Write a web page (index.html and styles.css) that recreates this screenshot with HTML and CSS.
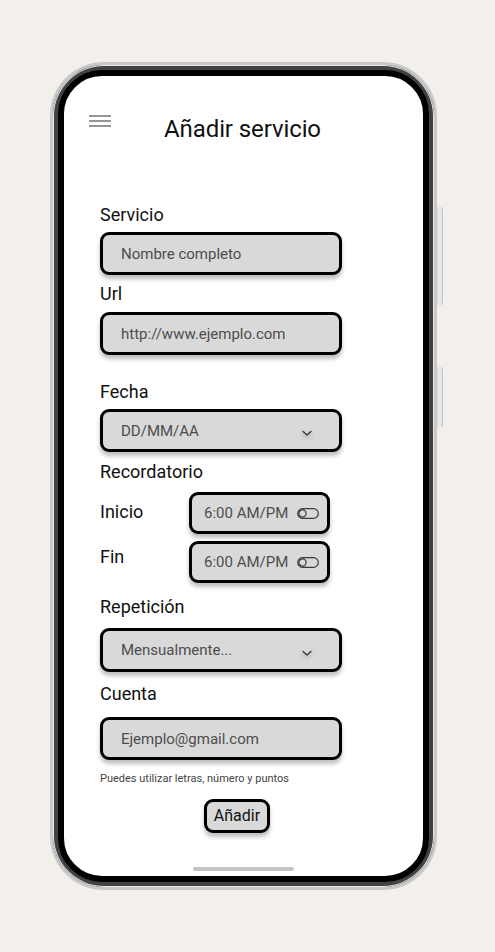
FILE: index.html
```html
<!DOCTYPE html>
<html lang="es">
<head>
<meta charset="utf-8">
<title>Añadir servicio</title>
<link rel="stylesheet" href="styles.css">
</head>
<body>
<div class="phone">
  <div class="side-btn side-btn--power"></div>
  <div class="side-btn side-btn--volume"></div>
  <div class="screen">
    <header class="header">
      <div class="menu">
        <svg width="22" height="12" viewBox="0 0 22 12" aria-hidden="true">
          <path d="M0 1H22M0 6H22M0 11H22" stroke="#767676" stroke-width="1.6" fill="none"/>
        </svg>
      </div>
      <h1 class="title">Añadir servicio</h1>
      <div></div>
    </header>

    <form class="form">
      <div class="label label--first">Servicio</div>
      <div class="field field--gap7">
        <span class="placeholder">Nombre completo</span>
      </div>

      <div class="label label--gap8">Url</div>
      <div class="field field--gap8">
        <span class="placeholder">http://www.ejemplo.com</span>
      </div>

      <div class="label label--gap26">Fecha</div>
      <div class="field field--gap7 field--select">
        <span class="placeholder">DD/MM/AA</span>
        <svg class="chevron" width="12" height="8" viewBox="0 0 12 8" aria-hidden="true">
          <path d="M2 2.5L6 6L10 2.5" stroke="#3a3a3a" stroke-width="1.4" fill="none" stroke-linecap="round" stroke-linejoin="round"/>
        </svg>
      </div>

      <div class="label label--gap9">Recordatorio</div>
      <div class="time-row time-row--first">
        <div class="row-label row-label--start">Inicio</div>
        <div class="time-box">
          <span class="placeholder">6:00 AM/PM</span>
          <svg class="toggle" width="22" height="11" viewBox="0 0 22 11" aria-hidden="true">
            <rect x="0.7" y="0.7" width="20.6" height="9.6" rx="4.8" fill="none" stroke="#3a3a3a" stroke-width="1.2"/>
            <circle cx="5.5" cy="5.5" r="3.6" fill="none" stroke="#3a3a3a" stroke-width="1.2"/>
          </svg>
        </div>
      </div>
      <div class="time-row time-row--second">
        <div class="row-label row-label--end">Fin</div>
        <div class="time-box">
          <span class="placeholder">6:00 AM/PM</span>
          <svg class="toggle" width="22" height="11" viewBox="0 0 22 11" aria-hidden="true">
            <rect x="0.7" y="0.7" width="20.6" height="9.6" rx="4.8" fill="none" stroke="#3a3a3a" stroke-width="1.2"/>
            <circle cx="5.5" cy="5.5" r="3.6" fill="none" stroke="#3a3a3a" stroke-width="1.2"/>
          </svg>
        </div>
      </div>

      <div class="label label--gap13">Repetición</div>
      <div class="field field--gap11 field--select field--tall">
        <span class="placeholder">Mensualmente...</span>
        <svg class="chevron chevron--low" width="12" height="8" viewBox="0 0 12 8" aria-hidden="true">
          <path d="M2 2.5L6 6L10 2.5" stroke="#3a3a3a" stroke-width="1.4" fill="none" stroke-linecap="round" stroke-linejoin="round"/>
        </svg>
      </div>

      <div class="label label--gap11">Cuenta</div>
      <div class="field field--gap13">
        <span class="placeholder">Ejemplo@gmail.com</span>
      </div>

      <p class="helper">Puedes utilizar letras, número y puntos</p>

      <button type="button" class="btn">Añadir</button>
    </form>

    <div class="home-indicator"></div>
  </div>
</div>
</body>
</html>
```

FILE: styles.css
```css
html, body {
  margin: 0;
  padding: 0;
}

body {
  background: #f3efeb;
  font-family: Roboto, "Noto Sans", "Liberation Sans", sans-serif;
  width: 495px;
  height: 952px;
  overflow: hidden;
}

.phone {
  position: relative;
  box-sizing: border-box;
  width: 387px;
  height: 828px;
  margin: 62px 0 0 50px;
  border-radius: 54px;
  background: #424242;
  border: 3px solid #c9c9c9;
  padding: 5px;
  box-shadow: inset 0 0 0 1px #e6e6e6;
}

.side-btn {
  position: absolute;
  right: -9px;
  width: 5px;
  border-radius: 0 3px 3px 0;
  background: linear-gradient(to right, #d6d6d6, #f0f0f0 60%, #d8d8d8);
  border-right: 1px solid #c4c4c4;
}

.side-btn--power {
  top: 142px;
  height: 98px;
}

.side-btn--volume {
  top: 302px;
  height: 60px;
}

.screen {
  box-sizing: border-box;
  height: 100%;
  border: 6px solid #000;
  border-radius: 44px;
  background: #fff;
  display: flex;
  flex-direction: column;
  overflow: hidden;
}

.header {
  display: grid;
  grid-template-columns: 1fr auto 1fr;
  padding-top: 39px;
}

.menu {
  padding-left: 25px;
  align-self: start;
  line-height: 0;
}

.title {
  margin: 0 0 0 -2px;
  font-size: 24px;
  line-height: 28px;
  font-weight: 400;
  color: #111;
  white-space: nowrap;
  letter-spacing: -0.1px;
}

.form {
  display: flex;
  flex-direction: column;
  align-items: flex-start;
  padding-left: 36px;
  margin: 0;
}

.label {
  font-size: 18px;
  line-height: 21px;
  color: #111;
}

.label--first { margin-top: 61px; }
.label--gap8 { margin-top: 8px; }
.label--gap9 { margin-top: 9px; }
.label--gap11 { margin-top: 11px; }
.label--gap13 { margin-top: 13px; }
.label--gap26 { margin-top: 26px; }

.field {
  box-sizing: border-box;
  width: 242px;
  height: 43px;
  border: 3px solid #000;
  border-radius: 9px;
  background: #d9d9d9;
  box-shadow: 0 4px 4px rgba(0, 0, 0, 0.25);
  display: flex;
  align-items: center;
  padding: 0 26px 0 18px;
}

.field--gap7 { margin-top: 7px; }
.field--gap8 { margin-top: 8px; }
.field--gap11 { margin-top: 11px; }
.field--gap13 { margin-top: 13px; }
.field--tall { height: 44px; }

.field--select {
  justify-content: space-between;
}

.placeholder {
  font-size: 15px;
  line-height: 18px;
  color: #4d4d4d;
  white-space: nowrap;
}

.chevron {
  margin-top: 4px;
  filter: drop-shadow(0 2px 2px rgba(0, 0, 0, 0.3));
}

.chevron--low {
  margin-top: 6px;
}

.time-row {
  display: flex;
  align-items: flex-start;
}

.time-row--first { margin-top: 10px; }
.time-row--second { margin-top: 7px; }

.row-label {
  width: 89px;
  font-size: 18px;
  line-height: 21px;
  color: #111;
}

.row-label--start { padding-top: 9px; }
.row-label--end { padding-top: 5px; }

.time-box {
  box-sizing: border-box;
  width: 141px;
  height: 42px;
  border: 3px solid #000;
  border-radius: 9px;
  background: #d9d9d9;
  box-shadow: 0 4px 4px rgba(0, 0, 0, 0.25);
  display: flex;
  align-items: center;
  justify-content: space-between;
  padding: 0 8px 0 12px;
}

.toggle {
  display: block;
}

.helper {
  margin: 12px 0 0;
  font-size: 11px;
  line-height: 13px;
  color: #444;
  white-space: nowrap;
}

.btn {
  margin-top: 14px;
  margin-left: 104px;
  box-sizing: border-box;
  width: 66px;
  height: 34px;
  border: 3px solid #000;
  border-radius: 9px;
  background: #d9d9d9;
  box-shadow: 0 4px 4px rgba(0, 0, 0, 0.25);
  font-family: Roboto, "Noto Sans", "Liberation Sans", sans-serif;
  font-size: 16px;
  line-height: 18px;
  color: #111;
  padding: 0;
}

.home-indicator {
  margin: auto auto 5px;
  width: 101px;
  height: 4px;
  border-radius: 2px;
  background: #c4c4c4;
}
```
